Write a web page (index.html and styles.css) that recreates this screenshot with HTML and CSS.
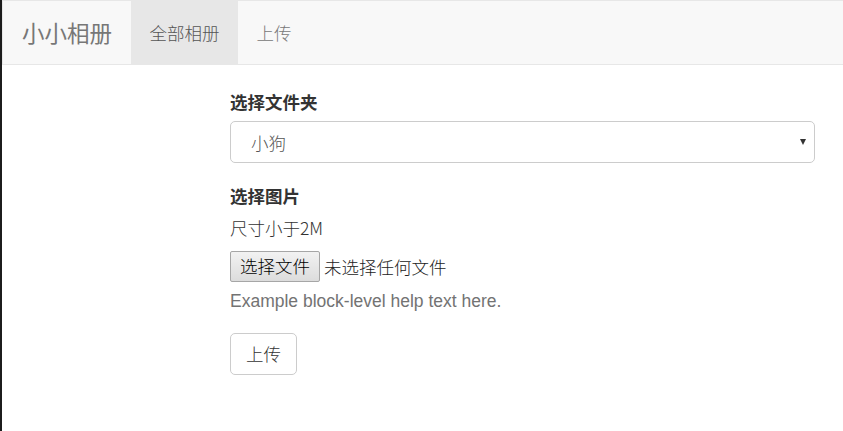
FILE: index.html
```html
<!DOCTYPE html>
<html lang="zh-CN">
<head>
<meta charset="utf-8">
<title>小小相册</title>
<link rel="stylesheet" href="styles.css">
</head>
<body>
<nav class="navbar">
  <a class="brand" href="#">小小相册</a>
  <ul class="nav">
    <li class="nav-item active"><a href="#">全部相册</a></li>
    <li class="nav-item"><a href="#">上传</a></li>
  </ul>
</nav>
<main class="content">
  <form class="upload-form">
    <div class="form-group">
      <label class="label">选择文件夹</label>
      <div class="select">
        <span class="select-value">小狗</span>
        <span class="select-arrow"></span>
      </div>
    </div>
    <div class="form-group">
      <label class="label">选择图片</label>
      <p class="note">尺寸小于2M</p>
      <div class="file-input">
        <button type="button" class="file-btn">选择文件</button>
        <span class="file-name">未选择任何文件</span>
      </div>
      <p class="help">Example block-level help text here.</p>
    </div>
    <button type="button" class="btn">上传</button>
  </form>
</main>
</body>
</html>
```
FILE: styles.css
```css
* { box-sizing: border-box; }
html, body { margin: 0; padding: 0; }
body {
  font-family: "Liberation Sans", Arial, "Noto Sans CJK SC", sans-serif;
  font-size: 17.5px;
  line-height: 25px;
  color: #333;
  background: #fff;
  border-left: 2px solid #1c1c1c;
  min-height: 431px;
}
.navbar {
  display: flex;
  align-items: stretch;
  height: 65px;
  background: #f8f8f8;
  border: 1px solid #e7e7e7;
  border-right: none;
  margin-bottom: 24px;
}
.brand {
  display: flex;
  align-items: center;
  padding: 0 19px 0 19px;
  font-size: 22.5px;
  color: #777;
  text-decoration: none;
  font-family: "Noto Sans CJK SC", sans-serif;
  font-weight: 400;
}
.nav {
  display: flex;
  list-style: none;
  margin: 0;
  padding: 0;
}
.nav-item a {
  display: flex;
  align-items: center;
  height: 100%;
  padding: 0 18.5px;
  color: #777;
  text-decoration: none;
  font-family: "Noto Sans CJK SC", sans-serif;
  font-weight: 300;
}
.nav-item.active a {
  background: #e7e7e7;
  color: #555;
}
.content {
  padding-left: 228px;
}
.upload-form {
  width: 585px;
  display: flex;
  flex-direction: column;
  align-items: flex-start;
}
.form-group {
  display: flex;
  flex-direction: column;
  align-items: flex-start;
  width: 100%;
  margin-bottom: 19.5px;
}
.label {
  font-weight: 700;
  margin-bottom: 7px;
  font-family: "Noto Sans CJK SC", sans-serif;
  color: #333;
}
.select {
  width: 100%;
  height: 42px;
  border: 1px solid #ccc;
  border-radius: 5px;
  display: flex;
  align-items: center;
  justify-content: space-between;
  padding: 0 8px 0 20px;
  background: #fff;
}
.select-value {
  font-family: "Noto Sans CJK SC", sans-serif;
  font-weight: 300;
  color: #555;
}
.select-arrow {
  width: 0;
  height: 0;
  border-left: 3.5px solid transparent;
  border-right: 3.5px solid transparent;
  border-top: 6px solid #333;
}
.note {
  margin: 0 0 11px;
  font-family: "Noto Sans CJK SC", sans-serif;
  font-weight: 300;
  color: #333;
}
.file-input {
  display: flex;
  align-items: center;
  height: 31px;
}
.file-btn {
  height: 31px;
  padding: 0 9px;
  font-family: "Noto Sans CJK SC", sans-serif;
  font-weight: 300;
  font-size: 17.5px;
  color: #000;
  background: linear-gradient(#f2f2f2, #dcdcdc);
  border: 1px solid #a6a6a6;
  border-radius: 2px;
  line-height: 1;
}
.file-name {
  margin-left: 4px;
  font-family: "Noto Sans CJK SC", sans-serif;
  font-weight: 300;
  color: #222;
}
.help {
  margin: 7px 0 0;
  color: #737373;
}
.btn {
  height: 42px;
  padding: 0 15px;
  background: #fff;
  border: 1px solid #ccc;
  border-radius: 5px;
  font-family: "Noto Sans CJK SC", sans-serif;
  font-weight: 300;
  font-size: 17.5px;
  color: #333;
  line-height: 1;
}
```
